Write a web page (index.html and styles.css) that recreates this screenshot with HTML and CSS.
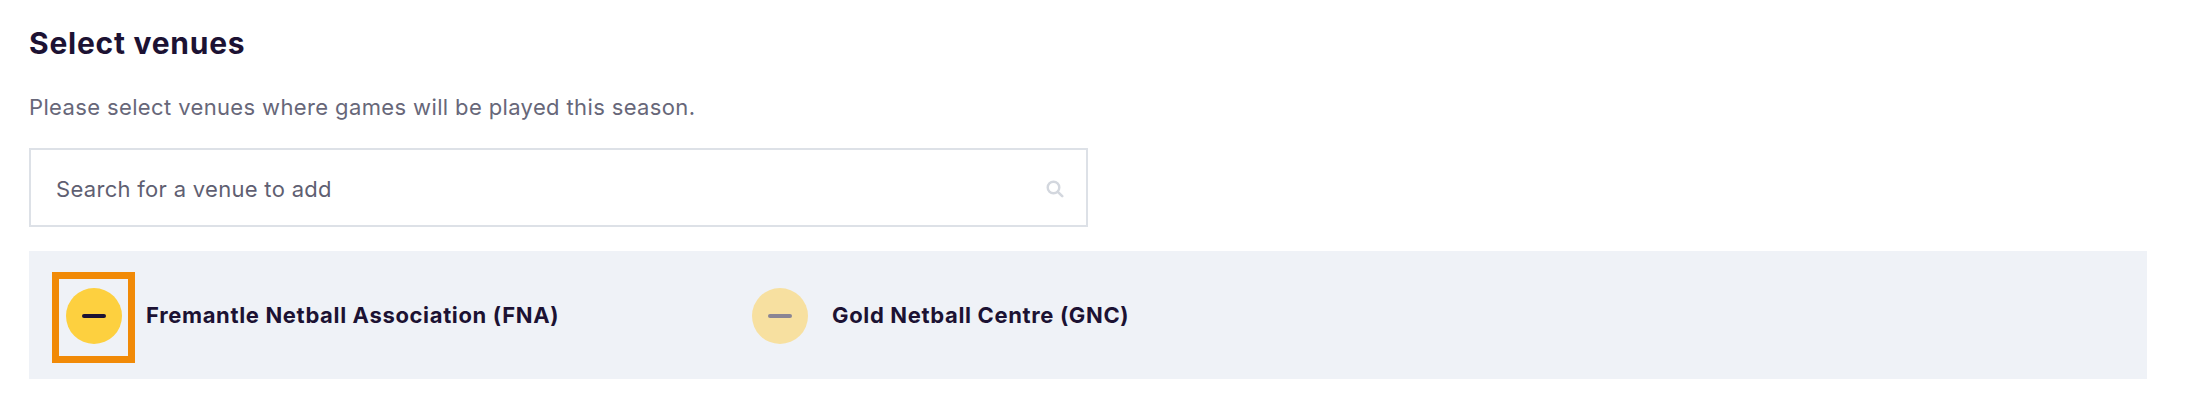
FILE: index.html
```html
<!DOCTYPE html>
<html lang="en">
<head>
<meta charset="utf-8">
<title>Select venues</title>
<link rel="stylesheet" href="styles.css">
</head>
<body>
<main class="page">
  <h1 class="title">Select venues</h1>
  <p class="subtitle">Please select venues where games will be played this season.</p>
  <div class="search">
    <input class="search-input" type="text" placeholder="Search for a venue to add">
    <svg class="search-icon" viewBox="0 0 18 18" width="18" height="18" aria-hidden="true">
      <circle cx="7.5" cy="7.5" r="5.8" fill="none" stroke="currentColor" stroke-width="2.4"/>
      <path d="M11.8 11.8 L16.2 16.2" stroke="currentColor" stroke-width="2.6" stroke-linecap="round"/>
    </svg>
  </div>
  <section class="venues">
    <div class="venue">
      <button class="remove remove--focus" type="button" aria-label="Remove Fremantle Netball Association (FNA)">
        <span class="remove-circle"><span class="remove-bar"></span></span>
      </button>
      <span class="venue-name">Fremantle Netball Association (FNA)</span>
    </div>
    <div class="venue">
      <button class="remove remove--muted" type="button" aria-label="Remove Gold Netball Centre (GNC)">
        <span class="remove-circle"><span class="remove-bar"></span></span>
      </button>
      <span class="venue-name">Gold Netball Centre (GNC)</span>
    </div>
    <div class="venue"></div>
  </section>
</main>
</body>
</html>
```
FILE: styles.css
```css
* { box-sizing: border-box; }

html, body {
  margin: 0;
  padding: 0;
  background: #ffffff;
}

body {
  font-family: "Inter", "Open Sans", "DejaVu Sans", sans-serif;
}

.page {
  padding: 25px 46px 0 29px;
}

.title {
  margin: 0;
  font-size: 30px;
  line-height: 36px;
  font-weight: 700;
  color: #1c1233;
  letter-spacing: 0.75px;
}

.subtitle {
  margin: 31px 0 0;
  font-size: 22px;
  line-height: 30px;
  font-weight: 400;
  color: #676779;
  letter-spacing: 0.37px;
}

.search {
  margin-top: 26px;
  width: 1059px;
  height: 79px;
  border: 2px solid #dde1e7;
  display: flex;
  align-items: center;
  padding: 0 22px 0 25px;
  background: #ffffff;
}

.search-input {
  flex: 1;
  border: 0;
  outline: none;
  background: transparent;
  font-family: inherit;
  font-size: 22px;
  letter-spacing: 0.3px;
  color: #1c1233;
  padding: 0;
  margin-top: 3px;
}

.search-input::placeholder {
  color: #5f5f72;
  opacity: 1;
}

.search-icon {
  color: #d3d7de;
  flex: none;
  margin-top: 2px;
}

.venues {
  margin-top: 24px;
  width: 2118px;
  background: #eff2f7;
  padding: 28px 30px 23px;
  display: grid;
  grid-template-columns: repeat(3, 1fr);
}

.venue {
  display: flex;
  align-items: center;
  gap: 18px;
  min-height: 77px;
}

.remove {
  width: 69px;
  height: 77px;
  border: 0;
  padding: 0 0 3px;
  margin: 0;
  background: transparent;
  display: flex;
  align-items: center;
  justify-content: center;
  flex: none;
  cursor: pointer;
}

.remove--focus {
  outline: 7px solid #f18a07;
}

.remove-circle {
  width: 56px;
  height: 56px;
  border-radius: 50%;
  background: #fdd03f;
  display: flex;
  align-items: center;
  justify-content: center;
}

.remove-bar {
  width: 24px;
  height: 4px;
  border-radius: 2px;
  background: #1c1233;
}

.remove--muted .remove-circle {
  background: #f7e0a0;
}

.remove--muted .remove-bar {
  background: #8a8594;
}

.venue-name {
  font-size: 22px;
  line-height: 30px;
  font-weight: 700;
  color: #1c1233;
  padding-bottom: 5px;
  letter-spacing: 0.65px;
}
```
